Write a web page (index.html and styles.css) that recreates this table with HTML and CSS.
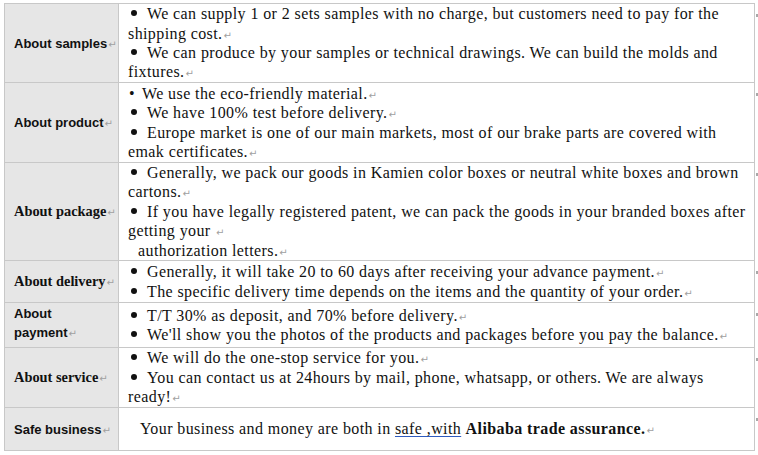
FILE: index.html
```html
<!DOCTYPE html>
<html>
<head>
<meta charset="utf-8">
<link rel="stylesheet" href="styles.css">
</head>
<body>
<table class="faq">
  <tr class="r1">
    <th class="label sans">About samples<span class="ret">↵</span></th>
    <td class="content">
      <div class="line b"><span class="dot"></span>We can supply 1 or 2 sets samples with no charge, but customers need to pay for the</div>
      <div class="line">shipping cost.<span class="ret">↵</span></div>
      <div class="line b"><span class="dot"></span>We can produce by your samples or technical drawings. We can build the molds and</div>
      <div class="line">fixtures.<span class="ret">↵</span></div>
    </td>
    <td class="eor"><span class="mark"></span></td>
  </tr>
  <tr class="r2">
    <th class="label sans">About product<span class="ret">↵</span></th>
    <td class="content">
      <div class="line s"><span class="sdot">•</span>We use the eco-friendly material.<span class="ret">↵</span></div>
      <div class="line b"><span class="dot"></span>We have 100% test before delivery.<span class="ret">↵</span></div>
      <div class="line b"><span class="dot"></span>Europe market is one of our main markets, most of our brake parts are covered with</div>
      <div class="line">emak certificates.<span class="ret">↵</span></div>
    </td>
    <td class="eor"><span class="mark"></span></td>
  </tr>
  <tr class="r3">
    <th class="label serif">About package<span class="ret">↵</span></th>
    <td class="content">
      <div class="line b"><span class="dot"></span>Generally, we pack our goods in Kamien color boxes or neutral white boxes and brown</div>
      <div class="line">cartons.<span class="ret">↵</span></div>
      <div class="line b"><span class="dot"></span>If you have legally registered patent, we can pack the goods in your branded boxes after</div>
      <div class="line">getting your <span class="ret">↵</span></div>
      <div class="line in">authorization letters.<span class="ret">↵</span></div>
    </td>
    <td class="eor"><span class="mark"></span></td>
  </tr>
  <tr class="r4">
    <th class="label serif">About delivery<span class="ret">↵</span></th>
    <td class="content">
      <div class="line b"><span class="dot"></span>Generally, it will take 20 to 60 days after receiving your advance payment.<span class="ret">↵</span></div>
      <div class="line b"><span class="dot"></span>The specific delivery time depends on the items and the quantity of your order.<span class="ret">↵</span></div>
    </td>
    <td class="eor"><span class="mark"></span></td>
  </tr>
  <tr class="r5">
    <th class="label sans top"><div class="lbl-line">About</div><div class="lbl-line">payment<span class="ret">↵</span></div></th>
    <td class="content">
      <div class="line b"><span class="dot"></span>T/T 30% as deposit, and 70% before delivery.<span class="ret">↵</span></div>
      <div class="line b"><span class="dot"></span>We'll show you the photos of the products and packages before you pay the balance.<span class="ret">↵</span></div>
    </td>
    <td class="eor"><span class="mark"></span></td>
  </tr>
  <tr class="r6">
    <th class="label serif">About service<span class="ret">↵</span></th>
    <td class="content">
      <div class="line b"><span class="dot"></span>We will do the one-stop service for you.<span class="ret">↵</span></div>
      <div class="line b"><span class="dot"></span>You can contact us at 24hours by mail, phone, whatsapp, or others. We are always</div>
      <div class="line">ready!<span class="ret">↵</span></div>
    </td>
    <td class="eor"><span class="mark"></span></td>
  </tr>
  <tr class="r7">
    <th class="label sans">Safe business<span class="ret">↵</span></th>
    <td class="content">
      <div class="line safe">Your business and money are both in <span class="gram">safe ,with</span> <strong>Alibaba trade assurance.</strong><span class="ret">↵</span></div>
    </td>
    <td class="eor"><span class="mark"></span></td>
  </tr>
</table>
</body>
</html>
```
FILE: styles.css
```css
html, body {
  margin: 0;
  padding: 0;
  background: #ffffff;
}

body {
  padding: 3px 0 0 4px;
}

.faq {
  border-collapse: collapse;
  table-layout: fixed;
  width: 755px;
  font-family: "Liberation Serif", serif;
  font-size: 16px;
  color: #111111;
}

.faq th,
.faq td.content {
  border: 1px solid #c8c8c8;
  padding: 0;
}

.label {
  width: 104px;
  padding-left: 9px !important;
  background: #e6e6e6;
  text-align: left;
  vertical-align: middle;
  white-space: nowrap;
  overflow: visible;
  color: #111111;
}

.label.top {
  vertical-align: top;
  padding-top: 1px !important;
}

.lbl-line {
  height: 19px;
  line-height: 19px;
}

.sans {
  font-family: "Liberation Sans", sans-serif;
  font-size: 13px;
  font-weight: bold;
}

.serif {
  font-family: "Liberation Serif", serif;
  font-size: 14.4px;
  font-weight: bold;
}

.content {
  padding-left: 9px !important;
  vertical-align: middle;
  letter-spacing: 0.4px;
}

.line {
  height: 19.4px;
  line-height: 19.4px;
  white-space: nowrap;
  overflow: visible;
}

.line.b {
  padding-left: 3px;
}

.line.s {
  padding-left: 1px;
}

.line.in {
  padding-left: 10px;
}

.line.safe {
  padding-left: 12px;
}

.dot {
  display: inline-block;
  width: 6px;
  height: 6px;
  border-radius: 50%;
  background: #111111;
  margin-right: 10px;
  vertical-align: 3px;
  line-height: 0;
}

.sdot {
  display: inline-block;
  width: 13px;
  line-height: 0;
}

.ret {
  font-family: "DejaVu Sans", sans-serif;
  font-size: 10px;
  line-height: 0;
  letter-spacing: 0;
  font-weight: normal;
  color: #a0a0a0;
  margin-left: 1px;
}

.gram {
  text-decoration: underline;
  text-decoration-color: #2e5bbf;
  text-underline-offset: 2px;
}

.eor {
  width: 3px;
  padding: 0;
  vertical-align: top;
  border: none;
}

.mark {
  display: block;
  width: 2px;
  height: 3px;
  margin: 10px 0 0 1px;
  background: #a8a8a8;
}

.r1 td.content, .r1 th { height: 78px; }
.r2 td.content, .r2 th { height: 79px; }
.r3 td.content, .r3 th { height: 97px; }
.r4 td.content, .r4 th { height: 41px; }
.r5 td.content, .r5 th { height: 43px; }
.r6 td.content, .r6 th { height: 59px; }
.r7 td.content, .r7 th { height: 42px; }
```
